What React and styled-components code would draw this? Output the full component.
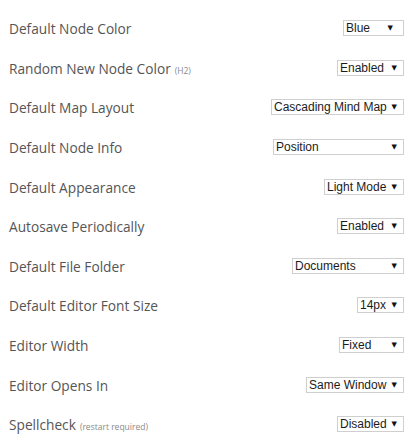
import React from 'react';
import styled, { createGlobalStyle } from 'styled-components';

const GlobalStyle = createGlobalStyle`
  html, body {
    margin: 0;
    padding: 0;
    background: #fff;
  }
`;

const Panel = styled.div`
  display: flex;
  flex-direction: column;
  padding: 9px 7px 0 9px;
  font-family: "Open Sans", "Noto Sans", sans-serif;
`;

const Row = styled.div`
  display: flex;
  align-items: center;
  justify-content: space-between;
  height: 39.6px;
`;

const Label = styled.span`
  font-size: 13.7px;
  color: #555;
  white-space: nowrap;
`;

const Note = styled.span`
  font-size: 8.5px;
  color: #8a8a8a;
  margin-left: 4px;
`;

const SelectWrap = styled.div`
  position: relative;
  display: flex;
  width: ${(p) => p.$width}px;
  margin-top: -1px;
`;

const Select = styled.select`
  appearance: none;
  -webkit-appearance: none;
  width: 100%;
  height: 16px;
  margin: 0;
  padding: 0 14px 0 2px;
  border: 1px solid #cfcfcf;
  border-radius: 0;
  background: #fff;
  color: #1c1c1c;
  font-family: "Liberation Sans", Arial, sans-serif;
  font-size: 12px;
  line-height: 14px;
  outline: none;
`;

const Caret = styled.span`
  position: absolute;
  right: ${(p) => p.$right}px;
  top: 4px;
  font-family: "DejaVu Sans", sans-serif;
  font-size: 7px;
  line-height: 8px;
  color: #111;
  pointer-events: none;
`;

const settings = [
  { label: 'Default Node Color', value: 'Blue', width: 61, caret: 11 },
  { label: 'Random New Node Color', note: '(H2)', value: 'Enabled', width: 67, caret: 7 },
  { label: 'Default Map Layout', value: 'Cascading Mind Map', width: 133, caret: 7 },
  { label: 'Default Node Info', value: 'Position', width: 131, caret: 7 },
  { label: 'Default Appearance', value: 'Light Mode', width: 80, caret: 7 },
  { label: 'Autosave Periodically', value: 'Enabled', width: 67, caret: 7 },
  { label: 'Default File Folder', value: 'Documents', width: 112, caret: 7 },
  { label: 'Default Editor Font Size', value: '14px', width: 47, caret: 7 },
  { label: 'Editor Width', value: 'Fixed', width: 65, caret: 7 },
  { label: 'Editor Opens In', value: 'Same Window', width: 98, caret: 7 },
  { label: 'Spellcheck', note: '(restart required)', value: 'Disabled', width: 67, caret: 7 },
];

export default function App() {
  return (
    <>
      <GlobalStyle />
      <Panel>
        {settings.map((s) => (
          <Row key={s.label}>
            <Label>
              {s.label}
              {s.note && <Note>{s.note}</Note>}
            </Label>
            <SelectWrap $width={s.width}>
              <Select defaultValue={s.value}>
                <option>{s.value}</option>
              </Select>
              <Caret $right={s.caret}>▼</Caret>
            </SelectWrap>
          </Row>
        ))}
      </Panel>
    </>
  );
}
